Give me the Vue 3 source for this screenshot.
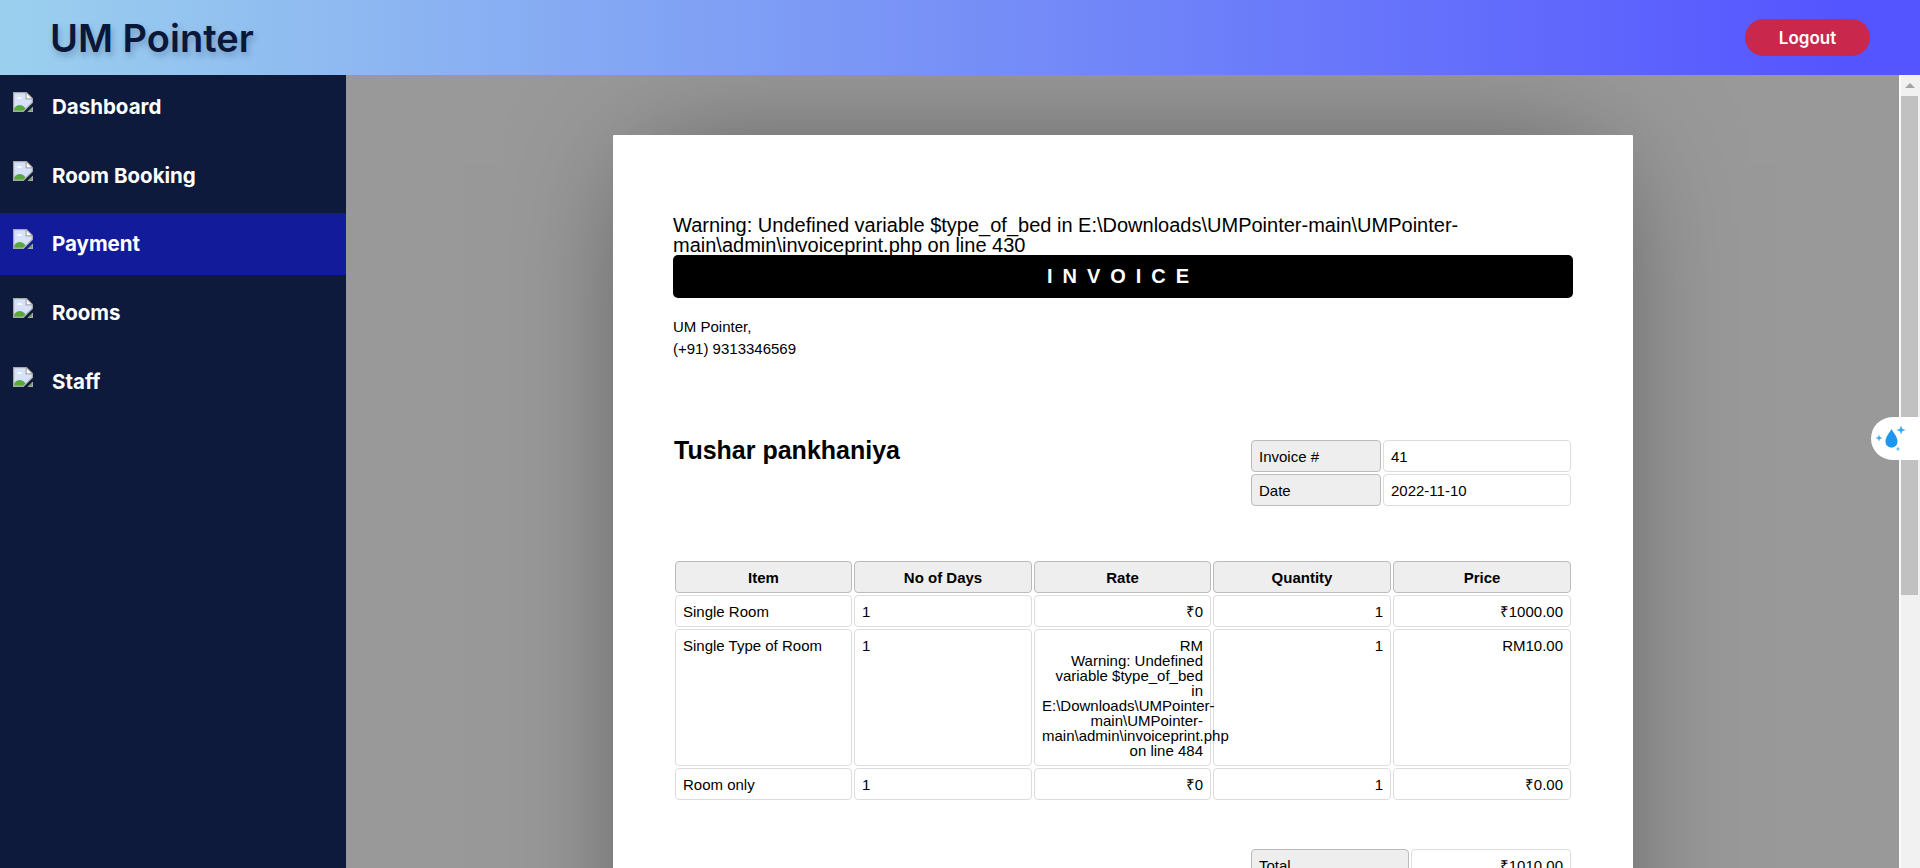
<script setup>
const navItems = [
  { label: 'Dashboard', active: false },
  { label: 'Room Booking', active: false },
  { label: 'Payment', active: true },
  { label: 'Rooms', active: false },
  { label: 'Staff', active: false }
]
const rows = [
  { item: 'Single Room', days: '1', rate: ['₹0'], qty: '1', price: '₹1000.00' },
  {
    item: 'Single Type of Room',
    days: '1',
    rate: ['RM', 'Warning: Undefined variable $type_of_bed in E:\\Downloads\\UMPointer-main\\UMPointer-main\\admin\\invoiceprint.php on line 484'],
    qty: '1',
    price: 'RM10.00'
  },
  { item: 'Room only', days: '1', rate: ['₹0'], qty: '1', price: '₹0.00' }
]
</script>

<template>
  <div class="app">
    <header class="topbar">
      <h1 class="brand">UM Pointer</h1>
      <button class="logout">Logout</button>
    </header>
    <div class="body">
      <nav class="side">
        <a v-for="n in navItems" :key="n.label" class="nav" :class="{ active: n.active }">
          <svg class="broken" viewBox="0 0 16 16" width="20" height="20">
            <path d="M0 0H11L16 5V8.5L8.5 16H0Z" fill="#a8a8a8" />
            <path d="M11.5 16L16 11.5V16Z" fill="#a8a8a8" />
            <path d="M1 1H10V6H15V8.1L8.1 15H1Z" fill="#d5e2fa" />
            <path d="M11 1.4L14.6 5H11Z" fill="#fff" />
            <path d="M3 5.4C3.4 3.6 6.6 3.4 7.6 5.4Z" fill="#fff" />
            <path d="M1 15V13C3.5 9.6 7 9.4 10 13L8.1 15Z" fill="#58a83a" />
            <path d="M12.4 15L15 12.4V15Z" fill="#58a83a" />
          </svg>
          <span>{{ n.label }}</span>
        </a>
      </nav>
      <main class="main">
        <article class="sheet">
          <div class="warn">Warning: Undefined variable $type_of_bed in E:\Downloads\UMPointer-main\UMPointer-main\admin\invoiceprint.php on line 430</div>
          <h2 class="banner">Invoice</h2>
          <address class="addr">
            <p>UM Pointer,</p>
            <p>(+91) 9313346569</p>
          </address>
          <div class="meta-row">
            <div class="cust">Tushar pankhaniya</div>
            <table class="meta">
              <tbody>
                <tr><th>Invoice #</th><td>41</td></tr>
                <tr><th>Date</th><td>2022-11-10</td></tr>
              </tbody>
            </table>
          </div>
          <table class="items">
            <thead>
              <tr><th>Item</th><th>No of Days</th><th>Rate</th><th>Quantity</th><th>Price</th></tr>
            </thead>
            <tbody>
              <tr v-for="r in rows" :key="r.item">
                <td>{{ r.item }}</td>
                <td>{{ r.days }}</td>
                <td class="num"><template v-for="(l, i) in r.rate" :key="i"><br v-if="i" />{{ l }}</template></td>
                <td class="num">{{ r.qty }}</td>
                <td class="num">{{ r.price }}</td>
              </tr>
            </tbody>
          </table>
          <table class="totals">
            <tbody>
              <tr><th>Total</th><td class="num">₹1010.00</td></tr>
            </tbody>
          </table>
        </article>
      </main>
      <div class="scrollbar">
        <div class="sb-btn"><i></i></div>
        <div class="sb-thumb"></div>
      </div>
    </div>
    <div class="drop">
      <svg viewBox="0 0 49 43" width="49" height="43">
        <path d="M20.5 12C18 16.5 14.5 20 14.5 24.5C14.5 28 17 30.5 20.5 30.5C24 30.5 26.5 28 26.5 24.5C26.5 20 23 16.5 20.5 12Z" fill="#1e96f0" />
        <path d="M30 8.5L31.2 11.8L34.5 13L31.2 14.2L30 17.5L28.8 14.2L25.5 13L28.8 11.8Z" fill="#3aa9f5" />
        <path d="M8 17.5L8.9 20.1L11.5 21L8.9 21.9L8 24.5L7.1 21.9L4.5 21L7.1 20.1Z" fill="#3aa9f5" />
        <path d="M27 29.5L27.6 31.4L29.5 32L27.6 32.6L27 34.5L26.4 32.6L24.5 32L26.4 31.4Z" fill="#3aa9f5" />
      </svg>
    </div>
  </div>
</template>

<style>
html, body { margin: 0; height: 100%; overflow: hidden; }
</style>

<style scoped>
.app {
  height: 868px;
  display: flex;
  flex-direction: column;
  overflow: hidden;
  position: relative;
  font-family: "Liberation Sans", Arial, sans-serif;
}
.topbar {
  height: 75px;
  flex: none;
  display: flex;
  align-items: center;
  justify-content: space-between;
  padding: 0 50px;
  background: linear-gradient(90deg, #9bd0ee 0%, #5555ff 96%);
}
.brand {
  margin: 0;
  font: 600 38px "Inter", "Open Sans", sans-serif;
  color: #0b1738;
  text-shadow: 2px 4px 6px rgba(13, 26, 61, 0.25);
}
.logout {
  width: 125px;
  height: 37px;
  border: 0;
  border-radius: 19px;
  background: #c9274b;
  color: #fff;
  font: 600 17px "Inter", "Open Sans", sans-serif;
}
.body {
  flex: 1;
  display: flex;
  min-height: 0;
  position: relative;
}
.side {
  width: 346px;
  flex: none;
  box-sizing: border-box;
  padding-top: 0.9px;
  background: #0e1a3c;
  display: flex;
  flex-direction: column;
  gap: 6.75px;
}
.nav {
  height: 62px;
  flex: none;
  display: flex;
  align-items: flex-start;
  color: #fff;
  font: 700 20.5px "Inter", "Open Sans", sans-serif;
  box-sizing: border-box;
  padding: 16px 0 0 13px;
  gap: 19px;
}
.nav.active { background: #121b99; }
.broken { flex: none; }
.nav span { line-height: 30px; }
.main {
  flex: 1;
  min-width: 0;
  background: #999;
  overflow: hidden;
  padding: 60px 0 0 267px;
}
.sheet {
  width: 1020px;
  height: 1320px;
  box-sizing: border-box;
  padding: 80px 60px 0;
  background: #fff;
  border-radius: 1px;
  box-shadow: 0 0 120px -30px rgba(0, 0, 0, 0.5);
  color: #000;
}
.warn {
  font-size: 20px;
  line-height: 20px;
}
.banner {
  margin: 0;
  height: 43px;
  line-height: 43px;
  background: #000;
  color: #fff;
  border-radius: 5px;
  text-align: center;
  text-transform: uppercase;
  font-size: 20px;
  font-weight: 700;
  letter-spacing: 10px;
}
.addr {
  font-style: normal;
  font-size: 15px;
  line-height: 22px;
  margin-top: 18px;
  height: 122px;
}
.addr p { margin: 0; }
.meta-row {
  display: flex;
  justify-content: space-between;
  align-items: flex-start;
}
.cust {
  font-size: 25px;
  font-weight: 700;
  line-height: 28px;
  margin-top: -2px;
  padding-left: 1px;
}
table {
  border-collapse: separate;
  border-spacing: 2px;
  table-layout: fixed;
  font-size: 15px;
  line-height: 15px;
}
th, td {
  box-sizing: border-box;
  height: 32px;
  padding: 8px 7px 7px;
  vertical-align: top;
  border: 1px solid #ddd;
  border-radius: 4px;
  text-align: left;
  font-weight: 400;
}
th { background: #eee; border-color: #bbb; }
.meta { width: 324px; }
.meta th { width: 130px; }
.items {
  width: 900px;
  margin-top: 51px;
}
.items th { width: 177px; text-align: center; font-weight: 700; }
.items th:nth-child(2), .items th:nth-child(4), .items th:nth-child(5) { width: 178px; }
.num { text-align: right; }
.totals {
  width: 324px;
  margin: 45px 0 0 auto;
}
.totals th { width: 158px; }
.scrollbar {
  position: absolute;
  right: 0;
  top: 0;
  bottom: 0;
  width: 21px;
  padding-right: 2px;
  background: #f1f1f1;
  border-left: 2px solid #fafafa;
  box-sizing: border-box;
}
.sb-btn {
  height: 21px;
  display: flex;
  align-items: center;
  justify-content: center;
}
.sb-btn i {
  width: 0;
  height: 0;
  border-left: 5px solid transparent;
  border-right: 5px solid transparent;
  border-bottom: 5px solid #a3a3a3;
}
.sb-thumb {
  height: 499px;
  background: #c1c1c1;
}
.drop {
  position: absolute;
  right: 0;
  top: 417px;
  width: 49px;
  height: 43px;
  background: #fff;
  border-radius: 22px 0 0 22px;
}
.drop svg { display: block; }
</style>
